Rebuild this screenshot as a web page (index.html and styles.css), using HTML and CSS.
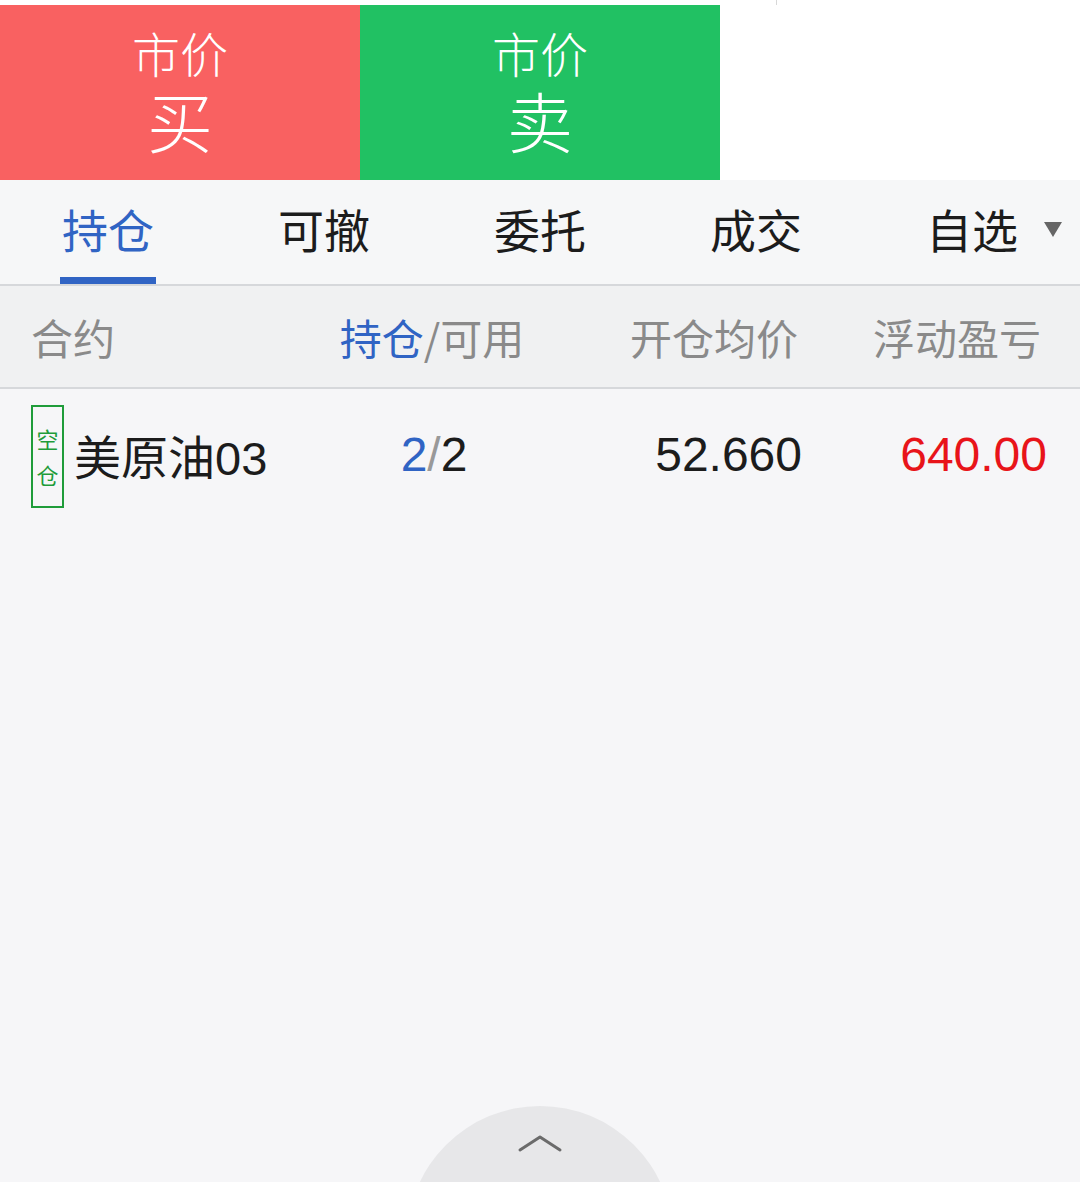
FILE: index.html
```html
<!DOCTYPE html>
<html lang="zh-CN">
<head>
<meta charset="utf-8">
<link rel="stylesheet" href="styles.css">
</head>
<body>
<div class="page">
  <div class="topstrip"><span class="tick"></span></div>
  <div class="actions">
    <div class="btn buy"><span class="small">市价</span><span class="big">买</span></div>
    <div class="btn sell"><span class="small">市价</span><span class="big">卖</span></div>
    <div class="blank"></div>
  </div>
  <div class="tabs">
    <div class="tab active">持仓</div>
    <div class="tab">可撤</div>
    <div class="tab">委托</div>
    <div class="tab">成交</div>
    <div class="tab">自选<span class="caret"></span></div>
  </div>
  <div class="thead">
    <div class="c1">合约</div>
    <div class="c2"><span class="blue">持仓</span>/可用</div>
    <div class="c3">开仓均价</div>
    <div class="c4">浮动盈亏</div>
  </div>
  <div class="row">
    <div class="c1"><span class="tag">空<br>仓</span><span class="name">美原油03</span></div>
    <div class="c2 num"><span class="blue">2</span><span class="slash">/</span>2</div>
    <div class="c3 num">52.660</div>
    <div class="c4 num red">640.00</div>
  </div>
  <div class="spacer"></div>
  <div class="pull">
    <svg class="chev" width="46" height="20" viewBox="0 0 46 20"><path d="M3 17 L23 4 L43 17" fill="none" stroke="#6b6b6b" stroke-width="3" stroke-linecap="round" stroke-linejoin="round"/></svg>
  </div>
</div>
</body>
</html>
```
FILE: styles.css
```css
html, body { margin: 0; padding: 0; }
body {
  width: 1080px;
  height: 1182px;
  overflow: hidden;
  background: #f6f6f8;
  font-family: "Noto Sans CJK SC", "Noto Sans", sans-serif;
}
.page { position: relative; width: 1080px; height: 1182px; overflow: hidden; display: flex; flex-direction: column; }
.topstrip { height: 5px; background: #fff; position: relative; }
.tick { position: absolute; left: 776px; top: 0; width: 1px; height: 5px; background: #d8d8d8; }
.actions { display: flex; height: 175px; background: #fff; }
.btn { width: 360px; display: flex; flex-direction: column; align-items: center; color: #fff; }
.buy { background: #f96161; }
.sell { background: #21c163; }
.blank { flex: 1; background: #fff; }
.small { font-size: 48px; line-height: 52px; margin-top: 21px; font-weight: 300; }
.big { font-size: 66px; line-height: 66px; margin-top: 8px; font-weight: 300; }
.tabs { display: flex; height: 104px; background: #f6f7f8; border-bottom: 2px solid #d6d8db; }
.tab { width: 216px; display: flex; justify-content: center; align-items: center; font-size: 46px; color: #1c1c1c; position: relative; padding-bottom: 8px; box-sizing: border-box; }
.tab.active { color: #3064c4; }
.tab.active::after { content: ""; position: absolute; left: 60px; width: 96px; bottom: 0; height: 7px; background: #3064c4; }
.caret { position: absolute; right: 18px; top: 42px; width: 0; height: 0; border-left: 9px solid transparent; border-right: 9px solid transparent; border-top: 15px solid #666; }
.thead, .row { display: grid; grid-template-columns: 330px 204px 268px 245px; padding-right: 33px; align-items: center; }
.thead { height: 101px; background: #f0f1f2; border-bottom: 2px solid #d6d8db; font-size: 42px; color: #8a8a8a; }
.thead .c1 { padding-left: 31px; }
.c2 { text-align: center; }
.c3, .c4 { text-align: right; }
.thead .c3 { padding-right: 4px; }
.thead .c4 { padding-right: 6px; }
.blue { color: #3064c4; }
.row { height: 130px; font-size: 44px; color: #1c1c1c; padding-bottom: 4px; }
.row .c1 { display: flex; align-items: center; padding-left: 31px; }
.tag { display: flex; flex-direction: column; align-items: center; justify-content: center; width: 29px; height: 99px; border: 2px solid #1f9c3a; color: #1f9c3a; font-size: 22px; line-height: 36px; text-align: center; margin-top: 4px; }
.tag br { display: none; }
.name { margin-left: 10px; font-size: 47px; font-family: "Liberation Sans", "Noto Sans CJK SC", sans-serif; }
.num { font-family: "Liberation Sans", Arial, sans-serif; font-size: 48px; }
.row .c2 { padding-left: 4px; }
.slash { color: #999; }
.red { color: #e8141a; }
.spacer { flex: 1; }
.pull { position: absolute; left: 407px; top: 1106px; width: 266px; height: 266px; border-radius: 50%; background: #e7e7e9; display: flex; justify-content: center; }
.chev { margin-top: 27px; }
```
